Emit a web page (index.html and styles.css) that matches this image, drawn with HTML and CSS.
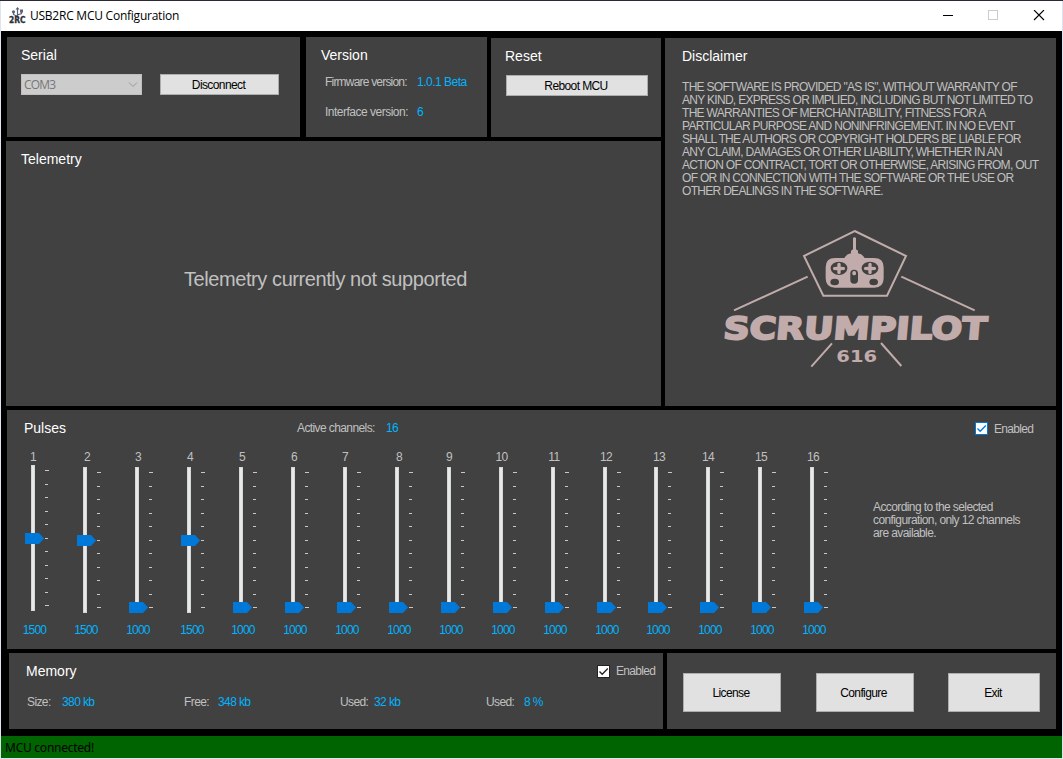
FILE: index.html
```html
<!DOCTYPE html>
<html lang="en">
<head>
<meta charset="utf-8">
<title>USB2RC MCU Configuration</title>
<link rel="stylesheet" href="styles.css">
</head>
<body>
<div class="window">
  <header class="titlebar">
    <svg class="app-icon" width="17" height="17" viewBox="0 0 17 17">
      <g fill="none" stroke="#5c6378" stroke-width="1.2">
        <path d="M8.500 1v9.500M8.500 9.500L4.500 7.500V5M8.500 8L12.500 6.500V3.500"/>
      </g>
      <path d="M6.500 2.500L8.500 0l2 2.500z" fill="#5c6378"/>
      <circle cx="4.500" cy="4.800" r="1.600" fill="#5c6378"/>
      <rect x="11" y="2.500" width="3" height="3" fill="#5c6378"/>
      <text class="app-icon-text" x="0" y="16" textLength="16.500" lengthAdjust="spacingAndGlyphs">2RC</text>
    </svg>
    <span class="title">USB2RC MCU Configuration</span>
    <svg class="controls" width="112" height="12" viewBox="0 0 112 12" fill="none">
      <path d="M0 5.500h10" stroke="#000"/>
      <rect x="45.500" y=".5" width="9" height="9" stroke="#ccc"/>
      <path d="M91 0l10 10M101 0L91 10" stroke="#000" stroke-width="1.100"/>
    </svg>
  </header>

  <main class="client">
    <div class="top">
      <div class="top-left">
        <div class="cards">
          <section class="panel serial">
            <h2>Serial</h2>
            <div class="serial-row">
              <div class="combo"><span>COM3</span>
                <svg width="10" height="6" viewBox="0 0 10 6"><path d="M1 .5l4 4 4-4" fill="none" stroke="#999"/></svg>
              </div>
              <button class="btn disconnect">Disconnect</button>
            </div>
          </section>
          <section class="panel version">
            <h2>Version</h2>
            <dl>
              <dt class="firmware">Firmware version:</dt><dd>1.0.1 Beta</dd>
              <dt>Interface version:</dt><dd>6</dd>
            </dl>
          </section>
          <section class="panel reset">
            <h2>Reset</h2>
            <button class="btn reboot">Reboot MCU</button>
          </section>
        </div>
        <section class="panel telemetry">
          <h2>Telemetry</h2>
          <p>Telemetry currently not supported</p>
        </section>
      </div>
      <section class="panel disclaimer">
        <h2>Disclaimer</h2>
        <p class="legal">THE SOFTWARE IS PROVIDED "AS IS", WITHOUT WARRANTY OF<br>ANY KIND, EXPRESS OR IMPLIED, INCLUDING BUT NOT LIMITED TO<br>THE WARRANTIES OF MERCHANTABILITY, FITNESS FOR A<br>PARTICULAR PURPOSE AND NONINFRINGEMENT. IN NO EVENT<br>SHALL THE AUTHORS OR COPYRIGHT HOLDERS BE LIABLE FOR<br>ANY CLAIM, DAMAGES OR OTHER LIABILITY, WHETHER IN AN<br>ACTION OF CONTRACT, TORT OR OTHERWISE, ARISING FROM, OUT<br>OF OR IN CONNECTION WITH THE SOFTWARE OR THE USE OR<br>OTHER DEALINGS IN THE SOFTWARE.</p>
        <svg class="logo" width="320" height="165" viewBox="0 0 960 495">
          <g fill="none" stroke="#c1acab" stroke-width="6">
            <path d="M464 48L618 123L561 242H370L312 123Z"/>
            <path d="M102 286L323 185M604 185L824 286M334 455L396 385M543 384L604 453"/>
          </g>
          <g fill="#c1acab">
            <path d="M459 69q4-5 9 0v34l6 4v8q16 4 20 14h28q29 0 29 28v33q0 28-28 28H405q-28 0-28-28v-33q0-28 28-28h28q4-10 20-14v-8l6-4z"/>
            <g fill="#414141">
              <ellipse cx="417" cy="160" rx="25" ry="20"/><ellipse cx="510" cy="160" rx="25" ry="20"/>
              <ellipse cx="404" cy="201" rx="13" ry="10"/><ellipse cx="521" cy="201" rx="13" ry="10"/>
              <rect x="451" y="164" width="23" height="42" rx="11"/>
            </g>
            <path id="stick" d="M412 146q5-5 10 0v9l11 1q5 4 0 9l-11 1v9q-5 5-10 0v-9l-11-1q-5-5 0-9l11-1z"/>
            <use href="#stick" x="93"/>
            <rect x="457" y="168" width="11" height="13" rx="5"/>
          </g>
          <text class="logo-name" transform="translate(68 371) skewX(-5)" textLength="790" lengthAdjust="spacingAndGlyphs">SCRUMPILOT</text>
          <text class="logo-num" x="409" y="441" textLength="122" lengthAdjust="spacingAndGlyphs">616</text>
        </svg>
      </section>
    </div>

    <section class="panel pulses">
      <header class="pulses-head">
        <h2>Pulses</h2>
        <span class="label active-label">Active channels:</span>
        <span class="value">16</span>
        <label class="check focus"><svg width="13" height="13" viewBox="0 0 13 13"><rect x=".5" y=".5" width="12" height="12"/><path d="M2.500 6.500L5.200 9.300L10.800 3.500"/></svg><span>Enabled</span></label>
      </header>
      <div class="pulses-body">
        <div class="channels" id="channels"></div>
        <p class="note">According to the selected<br>configuration, only 12 channels<br>are available.</p>
      </div>
    </section>

    <div class="bottom">
      <section class="panel memory">
        <header class="memory-head">
          <h2>Memory</h2>
          <label class="check"><svg width="13" height="13" viewBox="0 0 13 13"><rect x=".5" y=".5" width="12" height="12"/><path d="M2.500 6.500L5.200 9.300L10.800 3.500"/></svg><span>Enabled</span></label>
        </header>
        <div class="stats">
          <div class="stat size"><span class="label">Size:</span><span class="value">380 kb</span></div>
          <div class="stat free"><span class="label">Free:</span><span class="value">348 kb</span></div>
          <div class="stat used"><span class="label">Used:</span><span class="value">32 kb</span></div>
          <div class="stat percent"><span class="label">Used:</span><span class="value">8 %</span></div>
        </div>
      </section>
      <section class="panel actions">
        <button class="btn">License</button>
        <button class="btn">Configure</button>
        <button class="btn exit">Exit</button>
      </section>
    </div>
  </main>
  <footer class="status">MCU connected!</footer>
</div>
<script src="script.js"></script>
</body>
</html>
```
FILE: styles.css
```css
* { box-sizing: border-box; }
body {
  margin: 0;
  width: 1063px;
  height: 759px;
  padding: 1px;
  overflow: hidden;
  background: linear-gradient(#2c2838 1px, #dfe3ef 1px);
  font: 12px/13px "Liberation Sans", Arial, sans-serif;
  letter-spacing: -0.6px;
  color: #c0c0c0;
}
h2, p, dl, dd { margin: 0; }
h2 {
  font-size: 14px;
  line-height: 18px;
  font-weight: 400;
  letter-spacing: 0;
  color: #fff;
}
.window { width: 1061px; height: 757px; display: flex; flex-direction: column; background: #000; }

.titlebar { height: 30px; flex: none; display: flex; align-items: center; background: #fff; color: #000; padding: 0 17px 0 8px; }
.app-icon { margin-top: -1px; }
.app-icon-text { font: bold 8px "DejaVu Sans", sans-serif; letter-spacing: 0; fill: #2e2f38; stroke: #2e2f38; stroke-width: .3px; }
.title { margin: 0 0 0 4px; font: 12px/16px "Open Sans", sans-serif; letter-spacing: -0.24px; }
.controls { margin-left: auto; margin-right: -10px; }

.client { flex: 1; display: flex; flex-direction: column; gap: 4px; padding: 6px 6px 0 5px; }
.panel { background: #414141; }
.top { height: 369px; display: flex; gap: 4px; }
.top-left { width: 655px; display: flex; flex-direction: column; gap: 4px; }
.cards { height: 100px; display: flex; }
.serial { width: 293px; margin-left: 1px; padding: 9px 0 0 14px; }
.serial-row { display: flex; gap: 18px; margin-top: 10px; }
.combo { width: 121px; height: 21px; border: 1px solid #bfbfbf; background: #ccc; color: #777; display: flex; align-items: center; justify-content: space-between; padding: 0 3px 0 2px; font: 12px/16px "Open Sans", sans-serif; letter-spacing: -0.8px; }
.btn { width: 98px; height: 39px; padding: 1px 2px 0 0; border: 1px solid #adadad; background: #e1e1e1; color: #000; font: inherit; letter-spacing: -0.6px; }
.disconnect { width: 119px; height: 21px; }
.version { width: 181px; margin-left: 6px; padding: 9px 0 0 15px; }
.version dl { display: grid; grid-template-columns: 92px 1fr; row-gap: 17px; margin: 12px 0 0 4px; letter-spacing: -0.5px; }
.version .firmware { letter-spacing: -0.8px; }
.reset { width: 170px; margin: 1px 0 0 4px; padding: 9px 0 0 14px; }
.reboot { display: block; width: 142px; height: 21px; margin: 10px 0 0 1px; }
dd, .value { color: #00b4ff; }
.telemetry { flex: 1; padding: 9px 0 0 15px; }
.telemetry p { margin: 98px 0 0 163px; font-size: 20px; line-height: 26px; letter-spacing: -0.42px; }
.disclaimer { width: 391px; margin-top: 1px; padding: 9px 0 0 17px; }
.legal { margin-top: 16px; white-space: nowrap; letter-spacing: -0.7px; }
.logo { display: block; margin: 17px 0 0 18px; }
.logo-name { font: bold 92px "DejaVu Sans", sans-serif; letter-spacing: 0; fill: #c1acab; stroke: #c1acab; stroke-width: 6px; }
.logo-num { font: bold 49px "DejaVu Sans", sans-serif; letter-spacing: 0; fill: #c1acab; }

.pulses { height: 239px; margin-left: 1px; padding: 9px 24px 0 16px; }
.pulses-head { display: flex; align-items: center; padding-left: 1px; }
.pulses-head h2 { width: 273px; }
.active-label { width: 89px; }
.pulses-head .check { margin-top: 1px; }
.check { margin-left: auto; display: flex; align-items: center; gap: 6px; }
.check span { width: 38px; padding-top: 1px; white-space: nowrap; letter-spacing: -0.7px; }
.check rect { fill: #fff; stroke: #222; }
.check path { fill: none; stroke: #222; stroke-width: 1.3; }
.check.focus rect, .check.focus path { stroke: #0078d7; }
.pulses-body { display: flex; }
.channels { display: flex; padding-top: 13px; }
.channel { width: 52px; }
.channel.narrow { width: 51px; }
.number, .reading { width: 30px; text-align: center; line-height: 14px; }
.reading { color: #00b4ff; letter-spacing: -0.8px; margin-top: -1px; }
.slider { display: block; margin-top: 1px; }
.note { margin: 64px 0 0 19px; white-space: nowrap; letter-spacing: -0.6px; }

.bottom { display: flex; gap: 4px; height: 76px; padding-left: 3px; }
.memory { width: 654px; padding: 9px 9px 0 17px; }
.memory-head { display: flex; align-items: center; }
.stats { display: flex; margin: 16px 0 0 1px; }
.stat { display: flex; width: 157px; }
.size .label { width: 35px; }
.free .label { width: 34px; }
.free { width: 156px; }
.used .label { width: 34px; }
.percent .label { width: 38px; }
.used { width: 146px; }
.actions { width: 389px; padding: 20px 16px 0; display: flex; justify-content: space-between; }
.exit { width: 92px; }

.status { height: 22px; background: #006400; color: #000; padding: 3px 0 0 4px; font: 12px/17px "Noto Sans", "Open Sans", sans-serif; letter-spacing: -0.25px; }
```
FILE: script.js
```js
// Channel data: pulse in microseconds and label/reading centres relative to the column.
const channels = [
  [1500, 10, 12], [1500, 12, 11.5], [1000, 11, 11.5], [1500, 11, 13.5],
  [1000, 11, 12.5], [1000, 11, 12.5], [1000, 10, 12.5], [1000, 12, 12.5],
  [1000, 10, 12.5], [1000, 10.5, 12.5], [1000, 11, 12.5], [1000, 11, 12.5],
  [1000, 13, 12.5], [1000, 10, 12.5], [1000, 11, 12.5], [1000, 11, 12.5]
];
const tickY = [5, 19, 32, 46, 59, 73, 86, 100, 113, 127, 140];

document.getElementById("channels").innerHTML = channels.map(([pulse, a, b], i) => {
  const top = i === 0 ? 0 : 2;
  const y = pulse === 1500 ? 68 : 135;
  const ticks = tickY.map((t, n) =>
    `<rect x="22" y="${t}" width="${n % 10 ? 3 : 4}" height="1" fill="#c8c8c8"/>`).join("");
  return `<div class="channel${i === 11 ? " narrow" : ""}">
    <div class="number" style="margin-left:${a - 15}px">${i + 1}</div>
    <svg class="slider" width="30" height="159" viewBox="0 0 30 159"><g transform="translate(0 ${top})">
      <rect x="8" y="0" width="4" height="146" fill="#d6d6d6"/><rect x="9" y="1" width="2" height="144" fill="#e7eaea"/>
      ${ticks}<path d="M2 ${y}h14l5 5.500l-5 5.500H2z" fill="#0078d7"/></g></svg>
    <div class="reading" style="margin-left:${b - 15.5}px">${pulse}</div>
  </div>`;
}).join("");
```
